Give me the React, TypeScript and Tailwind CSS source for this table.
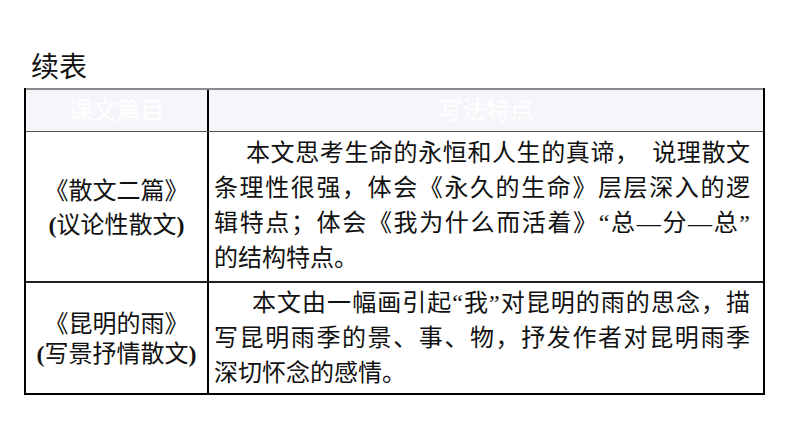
import React from 'react';

interface LineProps {
  children: React.ReactNode;
  indent?: string;
  justify?: boolean;
}

const Line = ({ children, indent = '', justify = true }: LineProps) => (
  <div className={`${indent} ${justify ? 'text-justify [text-align-last:justify]' : 'text-left'} whitespace-nowrap`}>
    {children}
  </div>
);

const Paren = ({ children }: { children: React.ReactNode }) => (
  <span className="font-bold">{children}</span>
);

const App = () => {
  return (
    <div className="w-[794px] h-[447px] bg-white pt-[49px] pl-[24px] font-['Liberation_Serif','Noto_Sans_CJK_SC',serif] text-[#111]">
      <div className="pl-[7px] text-[28px] leading-[38px] mb-[1px]">续表</div>

      <div className="w-[741px] border-x-2 border-b-2 border-black text-[24px]">
        {/* header */}
        <div className="grid grid-cols-[183px_1fr] h-[44px] bg-[#f5f6fa] border-t-2 border-t-[#8a8a8a] border-b-[1.5px] border-b-[#555] text-white">
          <div className="border-r-2 border-black flex items-center justify-center">课文篇目</div>
          <div className="flex items-center justify-center">写法特点</div>
        </div>

        {/* row 1 */}
        <div className="grid grid-cols-[183px_1fr] h-[151px] border-b-2 border-[#222]">
          <div className="border-r-2 border-black flex flex-col items-center justify-center leading-[34px] pt-[3px]">
            <div>《散文二篇》</div>
            <div>
              <Paren>(</Paren>议论性散文<Paren>)</Paren>
            </div>
          </div>
          <div className="pl-[5px] pr-[13px] py-[4px] leading-[35px]">
            <Line indent="indent-[32px]">本文思考生命的永恒和人生的真谛，　说理散文</Line>
            <Line>条理性很强，体会《永久的生命》层层深入的逻</Line>
            <Line>辑特点；体会《我为什么而活着》“总—分—总”</Line>
            <Line justify={false}>的结构特点。</Line>
          </div>
        </div>

        {/* row 2 */}
        <div className="grid grid-cols-[183px_1fr] h-[110px]">
          <div className="border-r-2 border-black flex flex-col items-center justify-center leading-[30px] pt-[2px]">
            <div>《昆明的雨》</div>
            <div>
              <Paren>(</Paren>写景抒情散文<Paren>)</Paren>
            </div>
          </div>
          <div className="pl-[5px] pr-[13px] pt-[3px] leading-[35px]">
            <Line indent="indent-[38px]">本文由一幅画引起“我”对昆明的雨的思念，描</Line>
            <Line>写昆明雨季的景、事、物，抒发作者对昆明雨季</Line>
            <Line justify={false}>深切怀念的感情。</Line>
          </div>
        </div>
      </div>
    </div>
  );
};

export default App;
